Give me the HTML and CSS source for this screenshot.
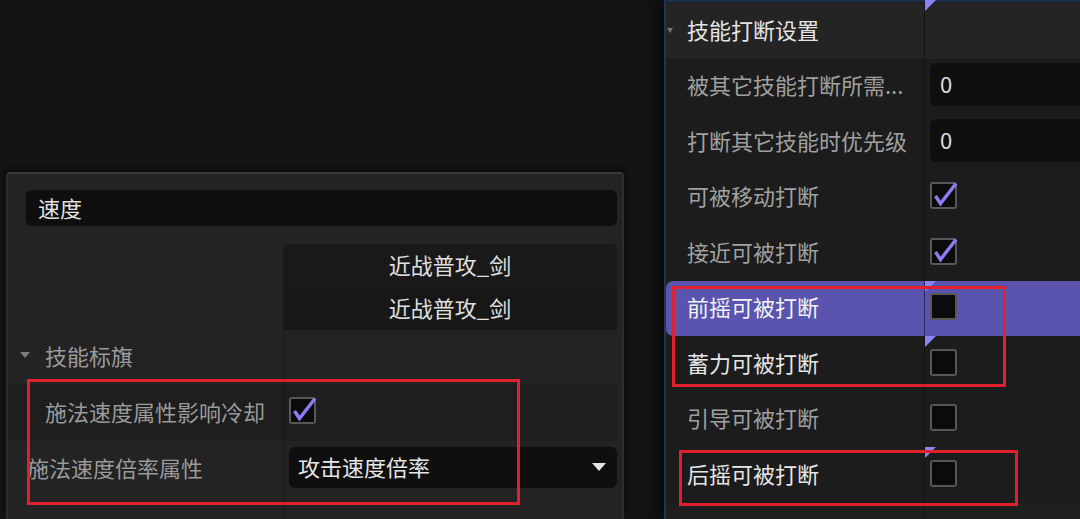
FILE: index.html
```html
<!DOCTYPE html>
<html lang="zh-CN">
<head>
<meta charset="utf-8">
<title>技能设置</title>
<link rel="stylesheet" href="styles.css">
</head>
<body>
<div class="app">
  <div class="left-area">
    <div class="panel">
      <div class="search">速度</div>
      <div class="table">
        <div class="trow trow-a">
          <div class="tlabel"></div>
          <div class="tval name-cell name-first">近战普攻_剑</div>
        </div>
        <div class="trow trow-b">
          <div class="tlabel"></div>
          <div class="tval name-cell name-last">近战普攻_剑</div>
        </div>
        <div class="trow trow-cat">
          <div class="tlabel cat-label"><span class="caret"></span>技能标旗</div>
          <div class="tval"></div>
        </div>
        <div class="trow trow-c">
          <div class="tlabel indent">施法速度属性影响冷却</div>
          <div class="tval">
            <span class="checkbox">
              <svg width="27" height="27" viewBox="0 0 27 27"><path d="M5.5 14 L10.5 21.5 L26 1.5" fill="none" stroke="#8a7ef6" stroke-width="3.4" stroke-linejoin="miter"/></svg>
            </span>
          </div>
        </div>
        <div class="trow trow-d">
          <div class="tlabel flush">施法速度倍率属性</div>
          <div class="tval">
            <div class="dropdown"><span>攻击速度倍率</span><span class="dd-arrow"></span></div>
          </div>
        </div>
        <div class="trow trow-e">
          <div class="tlabel"></div>
          <div class="tval"></div>
        </div>
      </div>
    </div>
  </div>

  <div class="right-panel">
    <div class="rp-row rp-header">
      <div class="rp-label head-label"><span class="rp-caret"></span>技能打断设置</div>
      <div class="rp-val"><span class="mod mod-top"></span></div>
    </div>
    <div class="rp-row">
      <div class="rp-label">被其它技能打断所需...</div>
      <div class="rp-val"><div class="num-input">0</div></div>
    </div>
    <div class="rp-row">
      <div class="rp-label">打断其它技能时优先级</div>
      <div class="rp-val"><div class="num-input">0</div></div>
    </div>
    <div class="rp-row">
      <div class="rp-label">可被移动打断</div>
      <div class="rp-val">
        <span class="checkbox"><svg width="27" height="27" viewBox="0 0 27 27"><path d="M5.5 14 L10.5 21.5 L26 1.5" fill="none" stroke="#8a7ef6" stroke-width="3.4"/></svg></span>
      </div>
    </div>
    <div class="rp-row">
      <div class="rp-label">接近可被打断</div>
      <div class="rp-val">
        <span class="checkbox"><svg width="27" height="27" viewBox="0 0 27 27"><path d="M5.5 14 L10.5 21.5 L26 1.5" fill="none" stroke="#8a7ef6" stroke-width="3.4"/></svg></span>
      </div>
    </div>
    <div class="rp-row selected">
      <div class="rp-label bright">前摇可被打断</div>
      <div class="rp-val"><span class="mod"></span><span class="checkbox"></span></div>
    </div>
    <div class="rp-row">
      <div class="rp-label bright">蓄力可被打断</div>
      <div class="rp-val"><span class="mod"></span><span class="checkbox"></span></div>
    </div>
    <div class="rp-row">
      <div class="rp-label">引导可被打断</div>
      <div class="rp-val"><span class="checkbox"></span></div>
    </div>
    <div class="rp-row">
      <div class="rp-label bright">后摇可被打断</div>
      <div class="rp-val"><span class="mod"></span><span class="checkbox"></span></div>
    </div>
    <div class="rp-row rp-tail">
      <div class="rp-label"></div>
      <div class="rp-val"></div>
    </div>
  </div>
</div>

<div class="annot annot-left"></div>
<div class="annot annot-right-1"></div>
<div class="annot annot-right-2"></div>
</body>
</html>
```

FILE: styles.css
```css
* { box-sizing: border-box; margin: 0; padding: 0; }

html, body {
  width: 1080px;
  height: 519px;
  overflow: hidden;
  background: #141414;
}

body {
  position: relative;
  font-family: "Noto Sans CJK SC", "Noto Sans", sans-serif;
  font-size: 22px;
  color: #dcdcdc;
}

.app {
  display: flex;
  height: 519px;
}

/* ---------- left area ---------- */
.left-area {
  width: 664px;
  flex: none;
  padding: 172px 40px 0 6px;
}

.panel {
  height: 100%;
  background: #232323;
  border-style: solid;
  border-width: 2px 2px 0 2px;
  border-color: #3a3a3a #2e2e2e #2e2e2e #2e2e2e;
  border-radius: 4px 4px 0 0;
  box-shadow: 0 -3px 8px rgba(0, 0, 0, 0.55);
  display: flex;
  flex-direction: column;
}

.search {
  margin: 16px 5px 0 18px;
  height: 36px;
  line-height: 34px;
  padding-left: 12px;
  background: #0e0e0e;
  border-radius: 6px;
  color: #e2e2e2;
}

.table {
  margin: 18px 5px 0 0;
  flex: 1;
  display: flex;
  flex-direction: column;
}

.trow {
  display: flex;
  flex: none;
}

.trow-a { height: 44px; }
.trow-b { height: 42px; }
.trow-cat { height: 54px; }
.trow-c { height: 57px; background: #1e1e1e; }
.trow-d { height: 56px; }
.trow-e { flex: 1; }

.tlabel {
  width: 275px;
  flex: none;
  display: flex;
  align-items: center;
  padding-bottom: 4px;
  color: #9a9a9a;
  white-space: nowrap;
  overflow: hidden;
}

.tval {
  flex: 1;
  display: flex;
  align-items: center;
  padding-bottom: 4px;
  border-left: 1px solid #1a1a1a;
}

.name-cell {
  justify-content: center;
  background: #191919;
  border-left: none;
  color: #e0e0e0;
}

.name-first { border-radius: 6px 6px 0 0; }
.name-last { background: #171717; }

.cat-label { padding-left: 12px; }

.caret {
  width: 0;
  height: 0;
  border-left: 5px solid transparent;
  border-right: 5px solid transparent;
  border-top: 6px solid #7c7c7c;
  margin-right: 15px;
}

.indent { padding-left: 37px; }
.flush { padding-left: 19px; }

.checkbox {
  position: relative;
  display: block;
  width: 27px;
  height: 27px;
  flex: none;
  border: 2px solid #575757;
  border-radius: 3px;
  background: #0b0b0b;
}

.checkbox svg {
  position: absolute;
  left: -2px;
  top: -2px;
  overflow: visible;
}

.trow-c .checkbox { margin-left: 5px; }

.dropdown {
  flex: 1;
  margin-left: 5px;
  height: 41px;
  background: #0f0f0f;
  border-radius: 6px;
  padding: 0 11px 3px 9px;
  display: flex;
  align-items: center;
  justify-content: space-between;
  color: #e6e6e6;
}

.dd-arrow {
  width: 0;
  height: 0;
  border-left: 7px solid transparent;
  border-right: 7px solid transparent;
  border-top: 8px solid #e4e4e4;
  margin-top: 3px;
}

/* ---------- right panel ---------- */
.right-panel {
  flex: 1;
  position: relative;
  display: flex;
  flex-direction: column;
  background: #1c1c1c;
  border-left: 2px solid #1d3654;
  border-top: 2px solid #1b3049;
  padding-top: 1px;
  box-shadow: -8px 0 16px rgba(0, 0, 0, 0.6);
}

.rp-row {
  display: flex;
  height: 55.5px;
  flex: none;
}

.rp-header { background: #242424; }

.rp-tail { flex: 1; background: #1f1f1f; }

.rp-label {
  width: 259px;
  flex: none;
  border-right: 1px solid #131313;
  padding-left: 21px;
  padding-bottom: 4px;
  display: flex;
  align-items: center;
  color: #a0a0a0;
  white-space: nowrap;
  overflow: hidden;
}

.head-label {
  padding-left: 1px;
  color: #e4e4e4;
}

.rp-caret {
  width: 0;
  height: 0;
  border-left: 3px solid transparent;
  border-right: 3px solid transparent;
  border-top: 5px solid #777;
  margin-right: 14px;
  margin-top: 3px;
}

.bright { color: #e6e6e6; }

.rp-val {
  flex: 1;
  position: relative;
  display: flex;
  align-items: center;
  padding-left: 5px;
  padding-bottom: 3px;
}

.selected {
  background: #5a54ae;
  border-radius: 7px 0 0 7px;
}

.selected .rp-label {
  color: #f2f2f2;
  border-right-color: #2a2760;
}

.num-input {
  flex: 1;
  height: 43px;
  background: #0f0f0f;
  border-radius: 6px 0 0 6px;
  padding-left: 10px;
  padding-bottom: 3px;
  display: flex;
  align-items: center;
  color: #dedede;
}

.mod {
  position: absolute;
  left: 0;
  top: 0;
  width: 0;
  height: 0;
  border-top: 11px solid #8b82f3;
  border-right: 11px solid transparent;
}

.mod-top { top: -3px; }

/* ---------- annotations ---------- */
.annot {
  position: absolute;
  border: 3px solid #e0202c;
  pointer-events: none;
}

.annot-left { left: 27px; top: 379px; width: 493px; height: 126px; }
.annot-right-1 { left: 672px; top: 286px; width: 334px; height: 101px; }
.annot-right-2 { left: 679px; top: 450px; width: 339px; height: 56px; }
```
